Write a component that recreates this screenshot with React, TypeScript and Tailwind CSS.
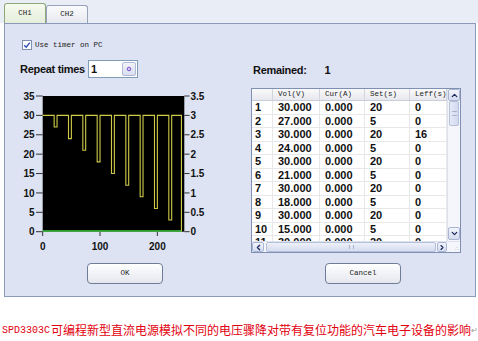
import { ChevronDown, ChevronLeft, ChevronRight, ChevronUp } from 'lucide-react';

const mono = "font-['Liberation_Mono',monospace]";
const sans = "font-['Liberation_Sans',Arial,sans-serif]";

const X = (t: number) => 42.7 + t * 0.5733;
const Y = (v: number) => 231.7 - v * 3.877;

function wavePath() {
  let d = `M ${X(0)} ${Y(30)}`;
  for (let k = 0; k < 9; k++) {
    const t = 20 + 25 * k;
    const low = 27 - 3 * k;
    d += ` H ${X(t)} V ${Y(low)} H ${X(t + 5)} V ${Y(30)}`;
  }
  d += ` H ${X(242)} V ${Y(0)}`;
  return d;
}

function Chart() {
  const left = [0, 5, 10, 15, 20, 25, 30, 35];
  return (
    <svg width={240} height={165} viewBox="5 88 240 165" className="block">
      <rect x={42.7} y={96} width={141.6} height={135.7} fill="#000" />
      {left.map((v) => (
        <g key={v}>
          <line x1={36} x2={42.7} y1={Y(v)} y2={Y(v)} stroke="#333" strokeWidth={1} />
          <text x={34.5} y={Y(v) + 3.6} textAnchor="end" fontSize={10} fontWeight={700} fontFamily="Liberation Sans, Arial, sans-serif" fill="#111">
            {v}
          </text>
          <line x1={184.3} x2={189.5} y1={Y(v)} y2={Y(v)} stroke="#333" strokeWidth={1} />
          <text x={190.5} y={Y(v) + 3.6} fontSize={10} fontWeight={700} fontFamily="Liberation Sans, Arial, sans-serif" fill="#111">
            {v / 10}
          </text>
        </g>
      ))}
      {[0, 100, 200].map((t) => (
        <g key={t}>
          <line x1={X(t)} x2={X(t)} y1={231.7} y2={236} stroke="#333" strokeWidth={1} />
          <text x={X(t)} y={250} textAnchor="middle" fontSize={10} fontWeight={700} fontFamily="Liberation Sans, Arial, sans-serif" fill="#111">
            {t}
          </text>
        </g>
      ))}
      <path d={wavePath()} fill="none" stroke="#cfcb48" strokeWidth={1.1} />
      <line x1={X(0)} x2={X(242)} y1={231} y2={231} stroke="#40c840" strokeWidth={1.4} />
    </svg>
  );
}

const rows = [
  ['1', '30.000', '0.000', '20', '0'],
  ['2', '27.000', '0.000', '5', '0'],
  ['3', '30.000', '0.000', '20', '16'],
  ['4', '24.000', '0.000', '5', '0'],
  ['5', '30.000', '0.000', '20', '0'],
  ['6', '21.000', '0.000', '5', '0'],
  ['7', '30.000', '0.000', '20', '0'],
  ['8', '18.000', '0.000', '5', '0'],
  ['9', '30.000', '0.000', '20', '0'],
  ['10', '15.000', '0.000', '5', '0'],
  ['11', '30.000', '0.000', '20', '0'],
];

const widths = ['w-[21px]', 'w-[47px]', 'w-[45px]', 'w-[45px]', 'w-[37px]'];
const heads = ['', 'Vol(V)', 'Cur(A)', 'Set(s)', 'Leff(s)'];

function ScrollBtn({ children, className = '' }: { children: React.ReactNode; className?: string }) {
  return (
    <div className={`flex items-center justify-center rounded-[2px] border border-[#a9b5d2] bg-linear-to-b from-[#f3f5fc] to-[#d5dcef] text-[#1c2a5e] ${className}`}>
      {children}
    </div>
  );
}

function DataTable() {
  return (
    <div className="w-[210px] h-[165px] border border-[#8090b2] bg-white flex flex-col">
      <div className="flex h-[152px]">
        <div className="w-[195px] flex flex-col">
          <div className="h-[12px] flex border-b border-[#c9cdd8] bg-linear-to-b from-[#fafafb] to-[#e7e8ee]">
            {heads.map((h, i) => (
              <div key={i} className={`${widths[i]} h-full border-r border-[#d2d5de] pl-[5px] ${mono} text-[7.5px] leading-[11px] text-[#222]`}>
                {h}
              </div>
            ))}
          </div>
          <div className="h-[140px] overflow-hidden">
            {rows.map((r) => (
              <div key={r[0]} className="h-[13.5px] flex border-b border-[#e8e8ea]">
                {r.map((c, i) => (
                  <div key={i} className={`${widths[i]} h-full border-r border-[#e8e8ea] ${i === 0 ? 'pl-[3px]' : 'pl-[5px]'} ${sans} text-[11px] font-bold leading-[13px] text-[#111]`}>
                    {c}
                  </div>
                ))}
              </div>
            ))}
          </div>
        </div>
        <div className="w-[13px] flex flex-col bg-[#f4f6fb] border-l border-[#dde2ee]">
          <ScrollBtn className="h-[12px]">
            <ChevronUp size={9} strokeWidth={3.5} />
          </ScrollBtn>
          <div className="h-[25px] mx-[1px] rounded-[2px] border border-[#b4bfd9] bg-linear-to-r from-[#e6eaf7] to-[#d3daef] flex items-center justify-center">
            <div className="w-[5px] h-[5px] border-y border-[#aab3cc]" />
          </div>
          <div className="flex-1" />
          <ScrollBtn className="h-[13px] mb-[1px]">
            <ChevronDown size={9} strokeWidth={3.5} />
          </ScrollBtn>
        </div>
      </div>
      <div className="h-[11px] flex items-center bg-[#f4f6fb] border-t border-[#dde2ee]">
        <ScrollBtn className="w-[12px] h-full">
          <ChevronLeft size={9} strokeWidth={3.5} />
        </ScrollBtn>
        <div className="w-[170px] h-[10px] ml-[2px] rounded-[2px] border border-[#b4bfd9] bg-linear-to-b from-[#eef1fa] to-[#d5dcef] flex items-center justify-center">
          <div className="w-[5px] h-[4px] border-x border-[#aab3cc]" />
        </div>
        <div className="flex-1" />
        <ScrollBtn className="w-[10px] h-full">
          <ChevronRight size={9} strokeWidth={3.5} />
        </ScrollBtn>
        <div className="w-[13px] h-full flex items-end justify-end pr-[1px] pb-[1px] text-[6px] leading-[6px] text-[#b8bfd0]">
          ∴
        </div>
      </div>
    </div>
  );
}

function Button({ label }: { label: string }) {
  return (
    <div className={`w-[76px] h-[21px] rounded-[4px] border border-[#6f7c98] bg-linear-to-b from-[#ffffff] to-[#e4e7ee] flex items-center justify-center ${mono} text-[7.5px] text-[#222]`}>
      {label}
    </div>
  );
}

export default function App() {
  return (
    <div className="w-[478px] h-[341px] bg-white overflow-hidden">
      <div className="h-[23px] bg-[#e9edf6] flex items-end pl-[4px]">
        <div className={`w-[42px] h-[20px] rounded-t-[3px] border border-b-0 border-[#8fa879] bg-linear-to-b from-[#f6faef] to-[#e6eedb] flex items-center justify-center ${mono} text-[7.5px] text-[#222]`}>
          CH1
        </div>
        <div className={`w-[42px] h-[18px] rounded-t-[3px] border border-b-0 border-[#98a2b8] bg-linear-to-b from-[#fafbfd] to-[#e6e9f0] flex items-center justify-center ${mono} text-[7.5px] text-[#222]`}>
          CH2
        </div>
      </div>
      <div className="ml-[4px] w-[472px] h-[274px] border border-[#8a9ab8] bg-[#dde3f3] flex flex-col">
        <div className="mt-[16px] ml-[17px] h-[10px] flex items-center gap-[3px]">
          <div className="w-[10px] h-[10px] border border-[#7f8fb0] bg-white flex items-center justify-center">
            <svg width={8} height={8} viewBox="0 0 8 8">
              <path d="M1.2 4.2 L3.2 6.2 L6.8 1.6" fill="none" stroke="#3552b5" strokeWidth={1.5} />
            </svg>
          </div>
          <span className={`${mono} text-[7.5px] leading-[10px] text-[#222]`}>Use timer on PC</span>
        </div>
        <div className="mt-[8px] flex">
          <div className="w-[246px] flex flex-col">
            <div className="mt-[2px] h-[18px] pl-[15px] flex items-center gap-[3px]">
              <span className={`${sans} text-[11px] font-bold tracking-[-0.3px] text-[#111]`}>Repeat times</span>
              <div className="w-[50px] h-[18px] border border-[#7f9db9] bg-white flex items-center justify-between pl-[2px] pr-[1px]">
                <span className={`${sans} text-[11px] font-bold text-[#111]`}>1</span>
                <div className="w-[14px] h-[14px] rounded-[2px] border border-[#b0bad4] bg-linear-to-b from-[#f1f3fa] to-[#d9dff0] flex items-center justify-center">
                  <svg width={6} height={6} viewBox="0 0 6 6">
                    <circle cx={3} cy={3} r={1.8} fill="#d9c8f4" stroke="#7a52c8" strokeWidth={1} />
                  </svg>
                </div>
              </div>
            </div>
            <div className="mt-[10px]">
              <Chart />
            </div>
          </div>
          <div className="w-[210px] flex flex-col">
            <div className={`mt-[5px] h-[14px] pl-[2px] flex items-center ${sans} text-[11px] font-bold tracking-[-0.3px] text-[#111]`}>
              <span>Remained:</span>
              <span className="ml-[18px]">1</span>
            </div>
            <div className="mt-[11px]">
              <DataTable />
            </div>
          </div>
        </div>
        <div className="mt-[10px] pl-[82px] flex gap-[162px]">
          <Button label="OK" />
          <Button label="Cancel" />
        </div>
      </div>
      <div className="mt-[26px] pl-[2px] h-[14px] flex items-center whitespace-nowrap text-[#e2000e]">
        <span className={`${mono} text-[10px]`}>SPD3303C</span>
        <span className="w-[4px]" />
        <span className="font-['Noto_Sans_CJK_SC',sans-serif] text-[12px] leading-[14px]">
          可编程新型直流电源模拟不同的电压骤降对带有复位功能的汽车电子设备的影响
        </span>
        <span className="text-[8px] text-[#999]">↵</span>
      </div>
    </div>
  );
}
